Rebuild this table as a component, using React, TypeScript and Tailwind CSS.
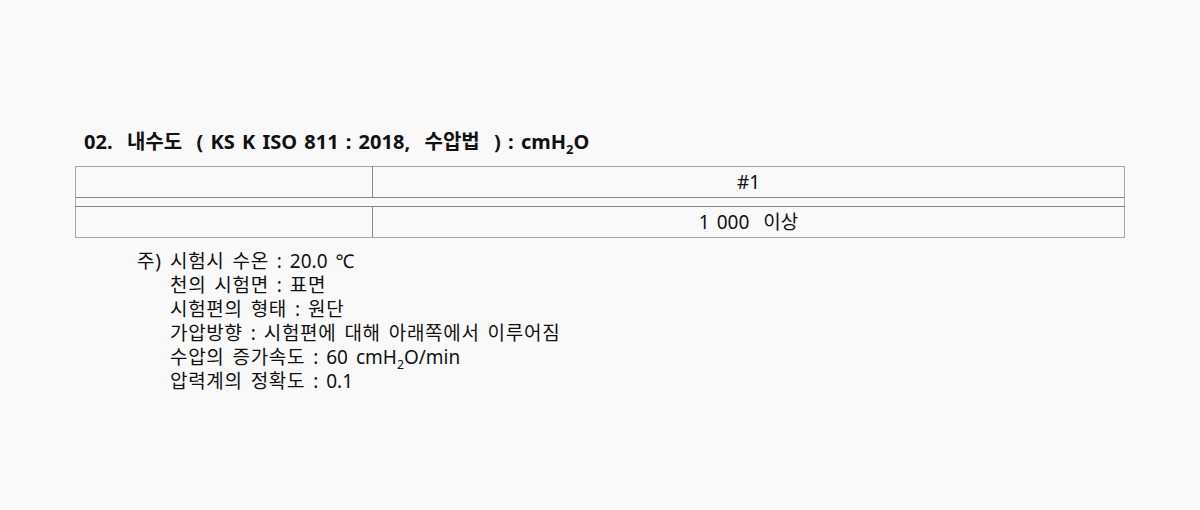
import type { ReactNode } from 'react';

const font = { fontFamily: '"Noto Sans", "Noto Sans CJK KR", sans-serif' };

// Hangul runs get a little tracking so they take the width they have in the original
function Ko({ text }: { text: string }) {
  const parts = text.split(/([\uac00-\ud7a3]+)/);
  return (
    <>
      {parts.map((p, i) =>
        /[\uac00-\ud7a3]/.test(p) ? (
          <span key={i} className="tracking-[0.7px]">
            {p}
          </span>
        ) : (
          <span key={i}>{p}</span>
        ),
      )}
    </>
  );
}

function H2O() {
  return (
    <>
      H<sub className="text-[0.65em] align-[-0.15em]">2</sub>O
    </>
  );
}

const notes: ReactNode[] = [
  <Ko text="천의 시험면 : 표면" />,
  <Ko text="시험편의 형태 : 원단" />,
  <Ko text="가압방향 : 시험편에 대해 아래쪽에서 이루어짐" />,
  <>
    <Ko text="수압의 증가속도 : 60 cm" />
    <H2O />
    /min
  </>,
  <Ko text="압력계의 정확도 : 0.1" />,
];

export default function App() {
  return (
    <div className="h-[510px] w-[1200px] bg-[#f9f9f9] text-[#111]" style={font}>
      <div className="ml-[75px] w-[1050px] pt-[127px]">
        <h2 className="ml-[9px] h-[39px] text-[20px] font-bold leading-[30px] [word-spacing:2px]">
          02.&nbsp; 내수도&nbsp; ( KS K ISO 811 : 2018,&nbsp; 수압법&nbsp; ) : cm<H2O />
        </h2>

        <table className="w-full border-collapse text-[19px]">
          <tbody>
            <tr className="h-[31px]">
              <td className="w-[297px] border border-[#a8a8a8] border-b-[#888] border-r-[#888]" />
              <td className="border border-[#a8a8a8] border-b-[#888] text-center leading-[24px]">#1</td>
            </tr>
            <tr className="h-[9px]">
              <td colSpan={2} className="border-x border-x-[#a8a8a8] border-b border-b-[#888] p-0" />
            </tr>
            <tr className="h-[31px]">
              <td className="border border-[#a8a8a8] border-t-[#888] border-r-[#888]" />
              <td className="border border-[#a8a8a8] border-t-[#888] text-center leading-[24px] [word-spacing:2px]">
                1 000&nbsp; 이상
              </td>
            </tr>
          </tbody>
        </table>

        <div className="mt-[11px] ml-[62px] text-[19px] leading-[24px] [word-spacing:3px]">
          <div className="flex">
            <span className="w-[33px] shrink-0">
              <Ko text="주)" />
            </span>
            <span>
              <Ko text="시험시 수온 : 20.0 ℃" />
            </span>
          </div>
          {notes.map((n, i) => (
            <div key={i} className="pl-[33px]">
              {n}
            </div>
          ))}
        </div>
      </div>
    </div>
  );
}
